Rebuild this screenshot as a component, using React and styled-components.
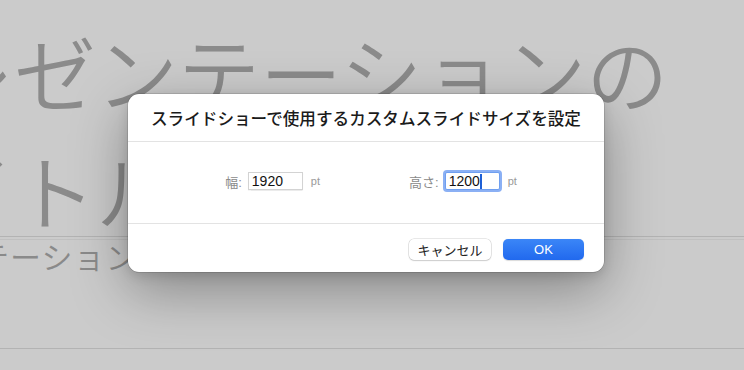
import React from "react";
import styled, { createGlobalStyle } from "styled-components";

const GlobalStyle = createGlobalStyle`
  html, body {
    margin: 0;
    padding: 0;
    background: #cbcbcb;
    overflow: hidden;
  }
`;

const uiFont = `"Liberation Sans", "Noto Sans CJK JP", sans-serif`;

const Stage = styled.div`
  position: relative;
  width: 744px;
  height: 370px;
  overflow: hidden;
  background: #cbcbcb;
  font-family: ${uiFont};
`;

// the slide sitting behind the sheet
const Slide = styled.div`
  display: flex;
  flex-direction: column;
  padding-top: 12px;
`;

const SlideTitle = styled.div`
  margin-left: -150px;
  margin-bottom: -12px;
  font-family: "Noto Sans CJK JP", serif;
  font-weight: 350;
  font-size: 82px;
  line-height: 118px;
  color: #8b8b8b;
  white-space: nowrap;
`;

const Rule = styled.div`
  height: 1px;
  background: ${(p) => p.tone || "#b3b3b3"};
  margin-top: ${(p) => p.gap || 0}px;
`;

const SlideSubtitle = styled.div`
  margin: 0 0 0 -150px;
  font-family: "Noto Sans CJK JP", serif;
  font-weight: 350;
  font-size: 31px;
  line-height: 31px;
  letter-spacing: 1px;
  color: #8a8a8a;
  white-space: nowrap;
`;

const Sheet = styled.div`
  position: absolute;
  left: 128px;
  top: 94px;
  width: 476px;
  background: #ffffff;
  border-radius: 11px;
  box-shadow: 0 0 0 0.5px rgba(0, 0, 0, 0.22), 0 18px 55px rgba(0, 0, 0, 0.34),
    0 4px 12px rgba(0, 0, 0, 0.12);
  display: flex;
  flex-direction: column;
`;

const Header = styled.div`
  height: 48px;
  display: flex;
  align-items: center;
  justify-content: center;
  font-family: "Noto Sans CJK JP", sans-serif;
  font-size: 16.6px;
  font-weight: 500;
  color: #1b1b1b;
  border-bottom: 1px solid #e3e3e3;
  padding-top: 1px;
  box-sizing: border-box;
`;

const Body = styled.div`
  height: 82px;
  display: flex;
  align-items: center;
  justify-content: center;
  gap: 89px;
  padding: 0 0 3px 10px;
  border-bottom: 1px solid #e3e3e3;
  box-sizing: border-box;
`;

const Field = styled.div`
  display: flex;
  align-items: center;
`;

const Label = styled.span`
  font-family: ${uiFont};
  font-size: 13px;
  color: #8a8a8a;
  margin-right: 6px;
`;

const SizeInput = styled.div`
  width: 55px;
  height: 18px;
  box-sizing: border-box;
  border: 1px solid ${(p) => (p.focused ? "#6f9ff0" : "#d3d3d3")};
  box-shadow: ${(p) =>
    p.focused ? "0 0 0 2px rgba(100, 150, 240, 0.75)" : "0 0.5px 1px rgba(0,0,0,0.08)"};
  border-radius: ${(p) => (p.focused ? "2px" : "0")};
  background: #fff;
  font-size: 14px;
  line-height: 16px;
  color: #111;
  padding-left: 3px;
  display: flex;
  align-items: center;
`;

const Caret = styled.span`
  display: inline-block;
  width: 1.5px;
  height: 15px;
  background: #1d5fd6;
  margin-left: 0.5px;
`;

const Unit = styled.span`
  font-size: 11px;
  color: #9a9a9a;
  margin-left: 8px;
`;

const Footer = styled.div`
  height: 48px;
  display: flex;
  align-items: center;
  justify-content: flex-end;
  gap: 12px;
  padding: 2px 20px 0 0;
  box-sizing: border-box;
`;

const Button = styled.div`
  width: ${(p) => (p.primary ? 81 : 82)}px;
  height: 21px;
  box-sizing: border-box;
  border-radius: 5px;
  display: flex;
  align-items: center;
  justify-content: center;
  font-size: 13px;
  font-family: ${uiFont};
  font-weight: ${(p) => (p.primary ? 500 : 400)};
  color: ${(p) => (p.primary ? "#ffffff" : "#222222")};
  background: ${(p) =>
    p.primary ? "linear-gradient(#3b86f7, #2169ee)" : "#ffffff"};
  box-shadow: ${(p) =>
    p.primary
      ? "0 0.5px 1px rgba(0,0,0,0.15)"
      : "0 0 0 0.5px rgba(0,0,0,0.18), 0 1px 1.5px rgba(0,0,0,0.12)"};
`;

export default function App() {
  return (
    <>
      <GlobalStyle />
      <Stage>
        <Slide>
          <SlideTitle>
            プレゼンテーションの
            <br />
            タイトル
          </SlideTitle>
          <Rule />
          <Rule gap={2} tone="#c0c0c0" />
          <SlideSubtitle>プレゼンテーションのサブタイトル</SlideSubtitle>
          <Rule gap={77} />
        </Slide>

        <Sheet>
          <Header>スライドショーで使用するカスタムスライドサイズを設定</Header>
          <Body>
            <Field>
              <Label>幅:</Label>
              <SizeInput>1920</SizeInput>
              <Unit>pt</Unit>
            </Field>
            <Field>
              <Label>高さ:</Label>
              <SizeInput focused>
                1200
                <Caret />
              </SizeInput>
              <Unit>pt</Unit>
            </Field>
          </Body>
          <Footer>
            <Button>キャンセル</Button>
            <Button primary>OK</Button>
          </Footer>
        </Sheet>
      </Stage>
    </>
  );
}
